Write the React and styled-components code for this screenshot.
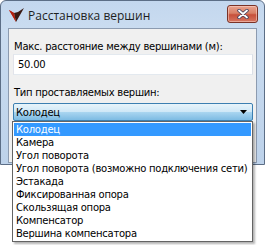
import React from "react";
import styled, { createGlobalStyle } from "styled-components";

const Global = createGlobalStyle`
  html, body { margin: 0; padding: 0; background: #ffffff; }
  body { width: 265px; height: 245px; overflow: hidden; }
`;

const Page = styled.div`
  position: relative;
  width: 265px;
  height: 245px;
  font-family: "DejaVu Sans", sans-serif;
  font-size: 10px;
  letter-spacing: -0.25px;
  color: #000;
`;

const Window = styled.div`
  width: 265px;
  height: 165px;
  box-sizing: border-box;
  border: 1px solid #5c6e86;
  border-radius: 6px 6px 0 0;
  background: linear-gradient(180deg, #c3d7ee 0px, #cadcf0 28px, #bdd2ea 100%);
  display: flex;
  flex-direction: column;
  padding: 0 7px 1px 7px;
`;

const TitleBar = styled.div`
  height: 27px;
  display: flex;
  align-items: center;
  gap: 3px;
`;

const TitleText = styled.span`
  font-family: "Open Sans", "Noto Sans", sans-serif;
  font-size: 12px;
  letter-spacing: 0;
  color: #1e1e1e;
  flex: 1;
  margin-top: 1px;
`;

const CloseButton = styled.div`
  width: 31px;
  height: 18px;
  box-sizing: border-box;
  border: 1px solid #7a3226;
  border-radius: 3px;
  background: linear-gradient(180deg, #e8a28e 0%, #d88066 45%, #c7503a 55%, #d67560 100%);
  display: flex;
  align-items: center;
  justify-content: center;
  margin-right: -1px;
  margin-top: -1px;
  box-shadow: inset 0 0 0 1px rgba(255, 220, 210, 0.5);
`;

const Client = styled.div`
  flex: 1;
  background: #f0f0f0;
  border: 1px solid #8c9bb0;
  display: flex;
  flex-direction: column;
  padding: 11px 3px 0 4px;
`;

const Label = styled.div`
  height: 13px;
  line-height: 13px;
  padding-left: 1px;
  margin-bottom: ${(p) => p.$gap || 0}px;
`;

const TextInput = styled.div`
  height: 21px;
  box-sizing: border-box;
  border: 1px solid #abadb3;
  border-top-color: #e3e9ef;
  border-left-color: #e2e3ea;
  border-right-color: #dbdfe6;
  border-bottom-color: #e3e9ef;
  background: #fff;
  display: flex;
  align-items: center;
  padding-left: 4px;
  margin-bottom: 11px;
`;

const Combo = styled.div`
  height: 18px;
  box-sizing: border-box;
  border: 1px solid #3c7fb1;
  border-radius: 2px;
  background: linear-gradient(180deg, #e8f4fb 0%, #cfe8f7 48%, #a9d5f0 52%, #7dbbe3 100%);
  display: flex;
  align-items: center;
  justify-content: space-between;
  padding: 0 5px 0 2px;
`;

const Arrow = styled.svg`
  display: block;
`;

const DropList = styled.ul`
  position: absolute;
  left: 12px;
  top: 121px;
  width: 241px;
  margin: 0;
  padding: 1px 1px;
  list-style: none;
  box-sizing: border-box;
  background: #fff;
  border: 1px solid #646464;
  box-shadow: 2px 2px 2px rgba(0, 0, 0, 0.3);
`;

const Item = styled.li`
  height: 13px;
  line-height: 13px;
  padding-left: 2px;
  white-space: nowrap;
  background: ${(p) => (p.$selected ? "#3399ff" : "transparent")};
  color: ${(p) => (p.$selected ? "#fff" : "#000")};
`;

const items = [
  "Колодец",
  "Камера",
  "Угол поворота",
  "Угол поворота (возможно подключения сети)",
  "Эстакада",
  "Фиксированная опора",
  "Скользящая опора",
  "Компенсатор",
  "Вершина компенсатора",
];

function AppIcon() {
  return (
    <svg width="17" height="16" viewBox="0 0 17 16">
      <polygon points="1,3 8,15 6,6" fill="#e0301e" />
      <polygon points="6,6 8,15 16,1 10,5" fill="#3a1a14" />
      <polygon points="1,3 6,6 8,15" fill="#b0200f" />
    </svg>
  );
}

function CloseIcon() {
  return (
    <svg width="12" height="10" viewBox="0 0 12 10">
      <path d="M2 1.5 L10 8.5 M10 1.5 L2 8.5" stroke="#3b3b5a" strokeWidth="3.4" strokeLinecap="round" />
      <path d="M2 1.5 L10 8.5 M10 1.5 L2 8.5" stroke="#ffffff" strokeWidth="1.8" strokeLinecap="round" />
    </svg>
  );
}

export default function App() {
  return (
    <Page>
      <Global />
      <Window>
        <TitleBar>
          <AppIcon />
          <TitleText>Расстановка вершин</TitleText>
          <CloseButton>
            <CloseIcon />
          </CloseButton>
        </TitleBar>
        <Client>
          <Label $gap={1}>Макс. расстояние между вершинами (м):</Label>
          <TextInput>50.00</TextInput>
          <Label $gap={4}>Тип проставляемых вершин:</Label>
          <Combo>
            <span>Колодец</span>
            <Arrow width="7" height="4" viewBox="0 0 7 4">
              <polygon points="0,0 7,0 3.5,4" fill="#000" />
            </Arrow>
          </Combo>
        </Client>
      </Window>
      <DropList>
        {items.map((t, i) => (
          <Item key={t} $selected={i === 0}>
            {t}
          </Item>
        ))}
      </DropList>
    </Page>
  );
}
